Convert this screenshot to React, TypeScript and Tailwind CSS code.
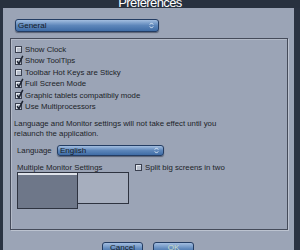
import type { ReactNode } from 'react';

const font = { fontFamily: '"Liberation Sans", Arial, sans-serif' };

function Check({ checked }: { checked?: boolean }) {
    return (
        <span className="relative inline-block w-[7px] h-[7px] shrink-0 border border-[#3a4050] bg-[#b9c0cd] shadow-[inset_1px_1px_0_#e4e8ef]">
            {checked && (
                <svg
                    className="absolute left-[0px] top-[-4px]"
                    width="8"
                    height="10"
                    viewBox="0 0 8 10"
                >
                    <path
                        d="M1 6.2 L3 8.6 L6.8 0.8"
                        fill="none"
                        stroke="#1c2230"
                        strokeWidth="1.5"
                    />
                </svg>
            )}
        </span>
    );
}

function Select({ label, width }: { label: string; width: string }) {
    return (
        <div
            className={`${width} h-full flex items-center justify-between rounded-[3px] border border-[#243d63] bg-gradient-to-b from-[#a3bee0] via-[#5d86ba] to-[#3f6ca5] pl-[2px] pr-[4px] shadow-[0_1px_1px_rgba(20,30,50,0.5)]`}
        >
            <span className="text-[8px] leading-none text-[#141a26]">{label}</span>
            <svg width="5" height="7" viewBox="0 0 5 7">
                <path d="M0.8 2.6 L2.5 0.9 L4.2 2.6 M0.8 4.4 L2.5 6.1 L4.2 4.4" fill="none" stroke="#e3ecf7" strokeWidth="1" />
            </svg>
        </div>
    );
}

function Row({ checked, children }: { checked?: boolean; children: ReactNode }) {
    return (
        <div className="flex items-center gap-[3px] h-[11.4px]">
            <Check checked={checked} />
            <span>{children}</span>
        </div>
    );
}

function Button({ label, light }: { label: string; light?: boolean }) {
    return (
        <div
            className={`w-[41px] h-[14px] rounded-[3px] border border-[#243d63] bg-gradient-to-b from-[#a3bee0] via-[#5d86ba] to-[#3f6ca5] flex items-start justify-center pt-[1px] text-[8px] leading-none ${
                light ? 'text-[#c9dcc6]' : 'text-[#141a26]'
            }`}
        >
            {label}
        </div>
    );
}

export default function App() {
    return (
        <div
            className="w-[300px] h-[250px] overflow-hidden bg-[#28313f] flex flex-col text-[#1b1f28] text-[7.8px]"
            style={font}
        >
            <div className="h-[8px] flex items-end justify-center shrink-0">
                <span className="text-[13px] leading-none tracking-[-0.6px] text-white mb-[-0.5px]">Preferences</span>
            </div>

            <div className="flex-1 flex">
                <div className="w-[3px] bg-[#2a3342]" />
                <div className="w-[291px] bg-[#9ba4b6] flex flex-col">
                    <div className="mt-[11px] ml-[12px] h-[13px]">
                        <Select label="General" width="w-[144px]" />
                    </div>

                    <div className="mt-[6px] ml-[7px] w-[278px] h-[192px] border border-[#454b5a] shadow-[1px_1px_0_#bcc3d0,inset_1px_1px_0_#b3bac8] flex flex-col">
                        <div className="pt-[5.3px] pl-[4px] leading-none">
                            <Row>Show Clock</Row>
                            <Row checked>Show ToolTips</Row>
                            <Row>Toolbar Hot Keys are Sticky</Row>
                            <Row checked>Full Screen Mode</Row>
                            <Row checked>Graphic tablets compatibily mode</Row>
                            <Row checked>Use Multiprocessors</Row>
                        </div>

                        <p className="mt-[6.5px] pl-[3px] leading-[9.5px]">
                            Language and Monitor settings will not take effect until you
                            <br />
                            relaunch the application.
                        </p>

                        <div className="mt-[7px] h-[11px] flex items-center">
                            <span className="pl-[6px] w-[46px] leading-none">Language</span>
                            <Select label="English" width="w-[107px]" />
                        </div>

                        <div className="mt-[7px] flex items-center h-[9px] leading-none">
                            <span className="pl-[6px] w-[124px]">Multiple Monitor Settings</span>
                            <Check />
                            <span className="ml-[3px]">Split big screens in two</span>
                        </div>

                        <div className="mt-[0px] ml-[6px] flex items-start">
                            <div className="w-[61px] h-[37px] border border-[#2e3340] bg-[#6e7789] shadow-[inset_0_2px_0_#dfe3ea]" />
                            <div className="ml-[-1px] w-[52px] h-[32px] border border-[#2e3340] bg-[#a6aebe]" />
                        </div>
                    </div>

                    <div className="mt-[12px] flex gap-[10px] pl-[99px]">
                        <Button label="Cancel" />
                        <Button label="OK" light />
                    </div>
                </div>
                <div className="flex-1 bg-[#2a3342]" />
            </div>
        </div>
    );
}
